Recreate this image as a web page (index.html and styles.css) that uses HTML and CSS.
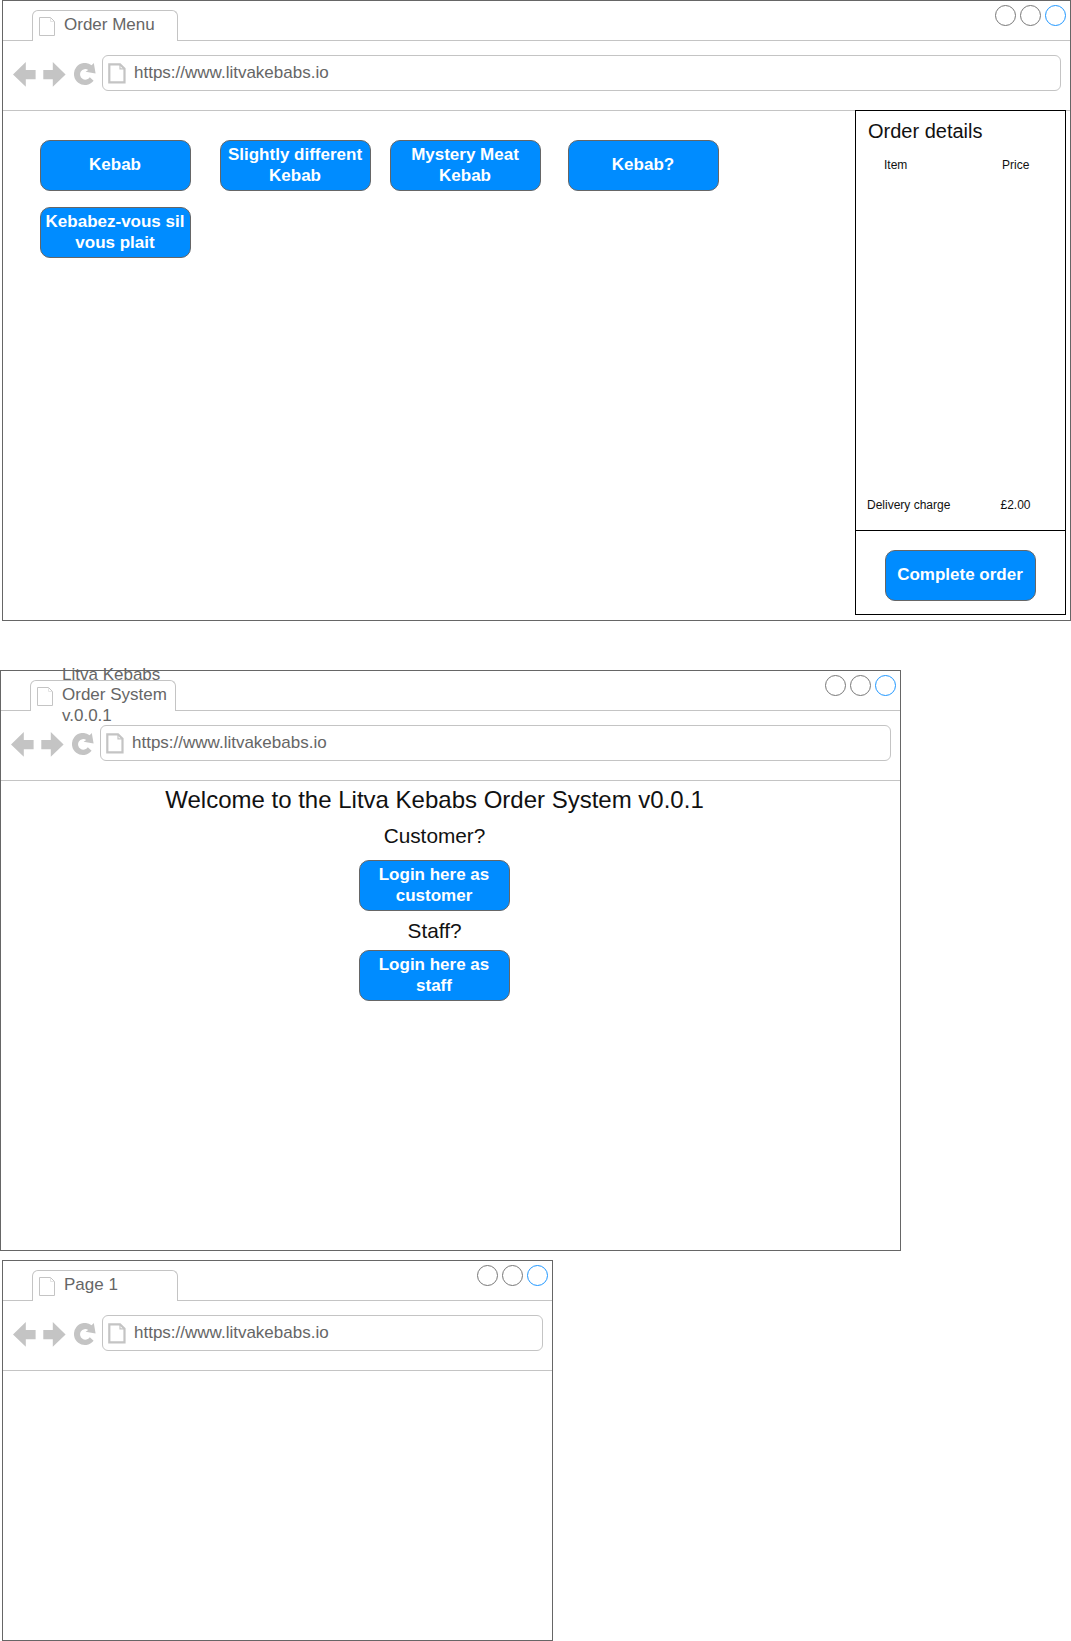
FILE: index.html
```html
<!DOCTYPE html>
<html lang="en">
<head>
<meta charset="utf-8">
<title>Litva Kebabs wireframes</title>
<link rel="stylesheet" href="styles.css">
</head>
<body>
<svg class="defs" width="0" height="0" aria-hidden="true">
  <symbol id="tab-page" viewBox="0 0 17 20"><path d="M.5.5H11.5L15.5 4.5V18.5H.5Z" fill="#fff" stroke="#c4c4c4"/><path d="M11.5 1V4.5H15" fill="none" stroke="#e4e4e4"/></symbol>
  <symbol id="url-page" viewBox="0 0 18 21"><path d="M1.3 1.3H12L16.5 5.8V19.3H1.3Z" fill="#fff" stroke="#c4c4c4" stroke-width="2.2"/><path d="M12 2V5.8H16" fill="none" stroke="#c4c4c4" stroke-width="1.2"/></symbol>
  <symbol id="back" viewBox="0 0 23 25"><path d="M0 12.5 12.8 0V8H22.6V17.2H12.8V24.8Z" fill="#c4c4c4"/></symbol>
  <symbol id="forward" viewBox="0 0 23 25"><path d="M22.6 12.5 9.8 0V8H.3V17.2H9.8V24.8Z" fill="#c4c4c4"/></symbol>
  <symbol id="reload" viewBox="0 0 23 24"><path d="M19.8 0 21.6 10.6 11.6 8.8 14.2 6.9A5.3 5.3 0 1 0 15.8 14.3L19.6 17.8A11 11 0 1 1 17.6 2.2Z" fill="#c4c4c4"/></symbol>
</svg>

<main class="board">
  <section class="window window-menu">
    <header class="chrome">
      <div class="tabs">
        <div class="tab"><svg class="tab-icon"><use href="#tab-page"/></svg><span class="tab-label">Order Menu</span></div>
        <div class="controls"><i class="dot"></i><i class="dot"></i><i class="dot dot-active"></i></div>
      </div>
      <div class="toolbar">
        <svg class="back"><use href="#back"/></svg><svg class="forward"><use href="#forward"/></svg><svg class="reload"><use href="#reload"/></svg>
        <div class="address"><svg class="url-icon"><use href="#url-page"/></svg><span>https://www.litvakebabs.io</span></div>
      </div>
    </header>
    <div class="menu-body">
      <div class="items">
        <button class="btn">Kebab</button>
        <button class="btn">Slightly different Kebab</button>
        <button class="btn">Mystery Meat Kebab</button>
        <button class="btn">Kebab?</button>
        <button class="btn">Kebabez-vous sil vous plait</button>
      </div>
      <aside class="order">
        <div class="order-list">
          <h2 class="order-title">Order details</h2>
          <div class="order-head"><span>Item</span><span>Price</span></div>
          <div class="order-charge"><span>Delivery charge</span><span>£2.00</span></div>
        </div>
        <div class="order-foot"><button class="btn">Complete order</button></div>
      </aside>
    </div>
  </section>

  <section class="window window-login">
    <header class="chrome">
      <div class="tabs">
        <div class="tab"><svg class="tab-icon"><use href="#tab-page"/></svg><span class="tab-label tab-label-wrapped">Litva Kebabs Order System v.0.0.1</span></div>
        <div class="controls"><i class="dot"></i><i class="dot"></i><i class="dot dot-active"></i></div>
      </div>
      <div class="toolbar">
        <svg class="back"><use href="#back"/></svg><svg class="forward"><use href="#forward"/></svg><svg class="reload"><use href="#reload"/></svg>
        <div class="address"><svg class="url-icon"><use href="#url-page"/></svg><span>https://www.litvakebabs.io</span></div>
      </div>
    </header>
    <div class="login-body">
      <h1 class="welcome">Welcome to the Litva Kebabs Order System v0.0.1</h1>
      <h2 class="role role-customer">Customer?</h2>
      <button class="btn btn-login">Login here as customer</button>
      <h2 class="role role-staff">Staff?</h2>
      <button class="btn btn-login">Login here as staff</button>
    </div>
  </section>

  <section class="window window-blank">
    <header class="chrome">
      <div class="tabs">
        <div class="tab"><svg class="tab-icon"><use href="#tab-page"/></svg><span class="tab-label">Page 1</span></div>
        <div class="controls"><i class="dot"></i><i class="dot"></i><i class="dot dot-active"></i></div>
      </div>
      <div class="toolbar">
        <svg class="back"><use href="#back"/></svg><svg class="forward"><use href="#forward"/></svg><svg class="reload"><use href="#reload"/></svg>
        <div class="address"><svg class="url-icon"><use href="#url-page"/></svg><span>https://www.litvakebabs.io</span></div>
      </div>
    </header>
  </section>
</main>
</body>
</html>
```
FILE: styles.css
```css
* { box-sizing: border-box; }
body {
  margin: 0;
  background: #fff;
  color: #111;
  font-family: "Liberation Sans", Arial, sans-serif;
}
h1, h2 { margin: 0; font-weight: 400; }
svg { display: block; flex: none; }
.defs { position: absolute; }

.board { display: flex; flex-direction: column; align-items: flex-start; }
.window { display: flex; flex-direction: column; border: 1px solid #666; background: #fff; }
.window-menu { width: 1069px; height: 621px; margin-left: 2px; }
.window-login { width: 901px; height: 581px; margin-top: 49px; }
.window-blank { width: 551px; height: 381px; margin: 9px 0 0 2px; }

/* Browser chrome */
.chrome { height: 110px; border-bottom: 1px solid #c4c4c4; color: #666; font-size: 17px; line-height: 20.4px; }
.tabs { display: flex; justify-content: space-between; height: 40px; border-bottom: 1px solid #c4c4c4; }
.tab {
  display: flex;
  align-items: center;
  width: 146px;
  height: 31px;
  margin: 9px 0 0 29px;
  padding: 0 0 2px 6px;
  border: 1px solid #c4c4c4;
  border-bottom: 0;
  border-radius: 6px 6px 0 0;
  background: linear-gradient(#fff, #fff) bottom / 100% 1px no-repeat;
}
.tab-icon { width: 17px; height: 20px; margin-top: 3px; }
.tab-label { width: 108px; margin-left: 8px; }
.tab-label-wrapped { padding-top: 1px; }
.controls { display: flex; gap: 4px; padding: 4px 4px 0 0; }
.dot { width: 21px; height: 21px; border: 1px solid #777; border-radius: 50%; }
.dot-active { border-color: #1f97ff; }
.toolbar { display: flex; align-items: flex-start; padding: 14px 9px 0 10px; }
.back, .forward { width: 23px; height: 25px; margin-top: 7px; }
.forward { margin-left: 7px; }
.reload { width: 23px; height: 24px; margin: 8px 0 0 8px; }
.address {
  display: flex;
  align-items: flex-start;
  flex: 1;
  height: 36px;
  margin-left: 5px;
  padding: 7px 0 0 5px;
  border: 1px solid #c4c4c4;
  border-radius: 6px;
}
.address span { margin-left: 8px; }
.url-icon { width: 18px; height: 21px; }

/* Buttons */
.btn {
  width: 151px;
  height: 51px;
  padding: 0 3px 0 2px;
  border: 1px solid #666;
  border-radius: 10px;
  background: #008cff;
  color: #fff;
  font: bold 17px/20.4px "Liberation Sans", Arial, sans-serif;
}

/* Order menu */
.menu-body { display: flex; justify-content: space-between; padding-right: 4px; }
.items {
  display: grid;
  grid-template-columns: 180px 170px 178px 151px;
  row-gap: 16px;
  align-content: start;
  padding: 29px 0 0 37px;
}
.order {
  display: flex;
  flex-direction: column;
  width: 211px;
  height: 505px;
  margin-top: -1px;
  border: 1px solid #000;
  background: #fff;
  font-size: 12px;
  line-height: 14px;
}
.order-list { display: flex; flex-direction: column; height: 420px; padding: 8px 0 18px; border-bottom: 1px solid #000; }
.order-title { padding-left: 12px; font-size: 20px; line-height: 24px; }
.order-head { display: grid; grid-template-columns: 118px auto; margin-top: 15px; padding-left: 28px; }
.order-charge { display: grid; grid-template-columns: 133.5px auto; margin-top: auto; padding-left: 11px; }
.order-foot { padding: 19px 0 0 29px; }

/* Login */
.login-body { display: flex; flex-direction: column; align-items: center; width: 867px; padding-top: 4px; }
.welcome { font-size: 24px; line-height: 29px; }
.role { font-size: 20.8px; line-height: 24px; }
.role-customer { margin: 10px 0 12px; }
.role-staff { margin: 8px 0 7px; }
.btn-login { padding: 0 16px 0 15px; }
```
